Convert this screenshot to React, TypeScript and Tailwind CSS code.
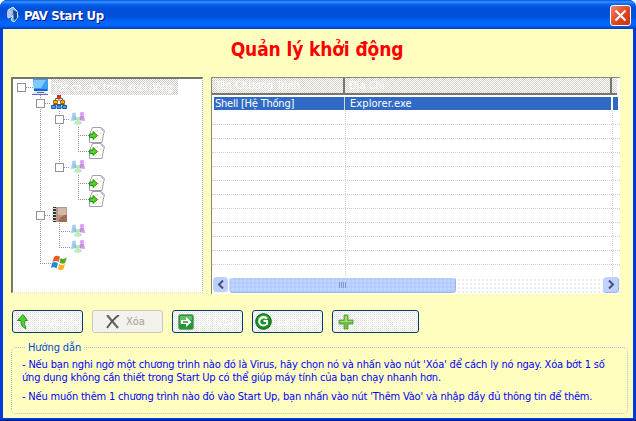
import React from "react";

type Kind = "pc" | "net" | "people" | "doc" | "book" | "win";
type Node = { kind: Kind; pad: string; box: boolean };

const L0 = "pl-[4px]";
const L1 = "pl-[23px]";
const L2 = "pl-[42px]";
const L3 = "pl-[61px]";

const nodes: Node[] = [
  { kind: "pc", pad: L0, box: true },
  { kind: "net", pad: L1, box: true },
  { kind: "people", pad: L2, box: true },
  { kind: "doc", pad: L3, box: false },
  { kind: "doc", pad: L3, box: false },
  { kind: "people", pad: L2, box: true },
  { kind: "doc", pad: L3, box: false },
  { kind: "doc", pad: L3, box: false },
  { kind: "book", pad: L1, box: true },
  { kind: "people", pad: L2, box: false },
  { kind: "people", pad: L2, box: false },
  { kind: "win", pad: L1, box: false },
];

function NodeIcon({ kind }: { kind: Kind }) {
  return (
    <svg width="16" height="16" viewBox="0 0 16 16" className="shrink-0">
      {kind === "pc" && (
        <g>
          <path d="M1 0H16V12H2Z" fill="#3aa0f4" />
          <path d="M2 1H14L9 9H2Z" fill="#7ccaff" />
          <path d="M2 10H15V12H2Z" fill="#1763d8" />
          <path d="M3 12H13L15 15H1Z" fill="#dcdff2" />
          <path d="M0 15.500H16M5 13.500H12" stroke="#6868b8" />
        </g>
      )}
      {kind === "net" && (
        <g>
          <path d="M8 4V6M4.500 5V3.500H11.500V5M2.500 11V9.500H13.500V11M8 9V11" stroke="#555" fill="none" />
          <path d="M6 0h4v4H6z" fill="#d83018" />
          <path d="M2.500 5.500h4v3h-4zM9.500 5.500h4v3h-4z" fill="#f8b810" stroke="#a06000" />
          <path d="M.5 10.500h4v3h-4zM6 10.500h4v3h-4zM11.500 10.500h4v3h-4z" fill="#48a0f0" stroke="#1858b0" />
        </g>
      )}
      {kind === "people" && (
        <g>
          <circle cx="4" cy="3.500" r="2" fill="#a8cdf0" />
          <circle cx="12" cy="3" r="2.200" fill="#dda0ee" />
          <path d="M1 10L2 5h4l2 4z" fill="#9fd0ef" />
          <path d="M8 9l2-4h4l1 5z" fill="#cf96ec" />
          <circle cx="8" cy="8" r="2" fill="#b8e6b0" />
          <path d="M4 13l1-3h6l1 3-4 1z" fill="#c0edb5" />
          <path d="M4 5l2 4M12 5l-2 4" stroke="#5d9abb" strokeDasharray="1 1" />
        </g>
      )}
      {kind === "doc" && (
        <g>
          <path d="M3.500 .5H12L15.500 4L14.500 7L13 15.500H.5V10L2 4Z" fill="#fff" stroke="#a0a0a0" />
          <path d="M12 1l3 3" stroke="#bbb" strokeWidth="2" />
          <path d="M8 4h1M11 6h1M9 9h1M7 12h1M11 12h1" stroke="#edb8b8" />
          <path d="M.5 7H4V4.500L8.500 8.500L4 12.500V10.500H.5Z" fill="#55d026" stroke="#259010" />
        </g>
      )}
      {kind === "book" && (
        <g>
          <path d="M3 0H16V15H3Z" fill="#b99683" />
          <path d="M7 1H15V8H7Z" fill="#d0b9a9" />
          <path d="M13 8H16V15H8V12Z" fill="#a16c54" />
          <path d="M2 0H5V15H2Z" fill="#333" />
          <path d="M1 1.500h4M1 4.500h4M1 7.500h4M1 10.500h4M1 13.500h4" stroke="#ddd" />
        </g>
      )}
      {kind === "win" && (
        <g>
          <path d="M3 2Q6-.5 9 2L7.500 7Q5 5 1.500 7Z" fill="#e75a24" />
          <path d="M9.500 3Q12 5 16 2.500L14 8Q11 9.500 8.500 7.500Z" fill="#58a529" />
          <path d="M1 8Q4 6 7 8.500L5.500 13.500Q3 11.500 0 13Z" fill="#238bdc" />
          <path d="M8 9Q11 11 14 9L12.500 14Q9.500 16.500 7 14Z" fill="#fab11f" />
        </g>
      )}
    </svg>
  );
}

function Tree() {
  return (
    <div className="relative h-[216px] w-[192px] border-l-2 border-t-2 border-r border-b border-dotted border-l-[#77776c] border-t-[#77776c] border-r-[#bbb] border-b-[#ddd] bg-white [border-left-style:solid] [border-top-style:solid]">
      <svg className="absolute left-[-2px] top-[-2px]" width="192" height="216" viewBox="11 77 192 216">
        <path
          d="M26 87.500H33M45 103.500H51M64 119.500H70M64 167.500H70M45 215.500H51M78 135.500H89M78 151.500H89M78 183.500H89M78 199.500H89M59 231.500H70M59 247.500H70M40 263.500H51M40.500 95V263M59.500 111V167M78.500 127V151M78.500 175V199M59.500 223V247"
          stroke="#929292"
          strokeDasharray="1 1"
          fill="none"
        />
      </svg>
      <div className="relative flex flex-col">
        {nodes.map((n, i) => (
          <div key={i} className={"flex h-4 items-center " + n.pad}>
            <span className={"mr-[6px] size-[9px] shrink-0 border " + (n.box ? "border-[#929292] bg-white" : "border-transparent")} />
            <NodeIcon kind={n.kind} />
            {i === 0 && (
              <span className="ml-[3px] flex h-4 w-[127px] items-center bg-[conic-gradient(#fff_25%,#cfcbc4_0_50%,#fff_0_75%,#cfcbc4_0)] bg-[length:2px_2px] pl-[2px] tracking-[-0.35px] text-white">
                Tất cả các trình khởi động
              </span>
            )}
          </div>
        ))}
      </div>
    </div>
  );
}

const header = "h-[17px] shrink-0 border-b-2 border-[#77776c] bg-[conic-gradient(#fff_25%,#d5d1ca_0_50%,#fff_0_75%,#d5d1ca_0)] bg-[length:2px_2px] text-white flex items-center";
const rows = Array.from({ length: 12 }, (_, i) => i);

function List() {
  return (
    <div className="flex h-[217px] w-[409px] flex-col overflow-hidden border-l border-t border-[#88887c] bg-white">
      <div className="flex">
        <div className={header + " w-[133px] border-r-2 pl-[3px]"}>Tên Chương Trình</div>
        <div className={header + " w-[267px] border-r-2 pl-[4px]"}>Địa Chỉ</div>
        <div className={header + " w-[5px]"} />
      </div>
      <div className="mb-px mt-[2px] flex h-[13px] shrink-0 text-white">
        <div className="ml-[2px] flex w-[131px] items-center border-r border-[#d8d8c8] bg-[#316ac5] pl-[1px] tracking-[-0.22px]">Shell [Hệ Thống]</div>
        <div className="flex w-[267px] items-center border-r border-white bg-[#316ac5] pl-[5px] tracking-[0.08px]">Explorer.exe</div>
        <div className="ml-px w-[5px] bg-[#316ac5]" />
      </div>
      <div className="flex h-[167px] shrink-0 flex-col overflow-hidden">
        {rows.map((r) => (
          <div key={r} className="flex h-[14px] shrink-0 border-b border-dotted border-[#cfcfca]">
            <div className="w-[134px] border-r border-dotted border-[#cfcfca]" />
            <div className="w-[267px] border-r border-dotted border-[#cfcfca]" />
          </div>
        ))}
      </div>
      <div className="mt-[-1px] flex h-[17px] w-[408px] shrink-0 bg-[conic-gradient(#fff_25%,#eee_0_50%,#fff_0_75%,#fff_0)] bg-[length:4px_4px]">
        <div className="ml-px flex h-[15px] w-[15px] items-center justify-center rounded-sm bg-[#bdcffb]">
          <svg width="8" height="9" viewBox="0 0 8 9"><path d="M6 .5L2 4.500L6 8.500" fill="none" stroke="#3f5280" strokeWidth="2" /></svg>
        </div>
        <div className="ml-[1px] flex h-4 w-[227px] items-center justify-center rounded-sm border border-[#98b5ee] border-t-white border-l-[#cdd8f5] bg-[conic-gradient(#b9cefe_25%,#c0d6ff_0_50%,#b9cefe_0_75%,#b0cafa_0)] bg-[length:4px_4px]">
          <div className="flex gap-px">
            <span className="h-[6px] w-px bg-[#8297d2]" /><span className="h-[6px] w-px bg-[#8297d2]" /><span className="h-[6px] w-px bg-[#8297d2]" /><span className="h-[6px] w-px bg-[#8297d2]" />
          </div>
        </div>
        <div className="ml-auto mr-[1px] flex h-4 w-[16px] items-center justify-center rounded-sm border-b border-r border-[#98b5ee] bg-[#c1d2fc]">
          <svg width="8" height="9" viewBox="0 0 8 9"><path d="M2 .5L6 4.500L2 8.500" fill="none" stroke="#3f5280" strokeWidth="2" /></svg>
        </div>
      </div>
    </div>
  );
}

const button =
  "flex h-[23px] items-center rounded-[3px] border border-[#003c74] bg-[conic-gradient(#fff_25%,#dddcd8_0_50%,#fff_0_75%,#eeede9_0)] bg-[length:2px_2px] text-white";

function Actions() {
  return (
    <div className="flex gap-[9px]">
      <button className={button + " w-[71px] pl-[4px]"}>
        <svg width="12" height="16" viewBox="0 0 12 16"><path d="M6 .5L10.500 6.500H8Q6.500 10 9 14.500Q3.500 13 4 6.500H.5Z" fill="#4dcf30" stroke="#259a1a" /></svg>
        <span className="ml-[7px] tracking-[-0.3px]">Phục Hồi</span>
      </button>
      <button className="flex h-[23px] w-[71px] items-center rounded-[3px] border border-[#c9c7ba] bg-[#f3f2ec] pl-[13px] text-[#a1a192]">
        <svg width="14" height="14" viewBox="0 0 14 14"><path d="M1 0L12 13" stroke="#666" strokeWidth="2.200" /><path d="M13 0Q8 3 1 13" fill="none" stroke="#555" strokeWidth="1.800" /></svg>
        <span className="ml-[6px]">Xóa</span>
      </button>
      <button className={button + " w-[71px] pl-[5px]"}>
        <svg width="16" height="16" viewBox="0 0 16 16"><rect x=".5" y=".5" width="15" height="15" rx="2" fill="#289438" stroke="#75ae78" /><path d="M2 2H14V6Q8 5 2 10Z" fill="#64be66" /><path d="M3 6H8V3L13.500 8L8 13V10H3Z" fill="#fff" /><path d="M5 8H10" stroke="#289438" strokeWidth="1.500" /></svg>
        <span className="ml-[6px] tracking-[-0.5px]">Vô hiệu</span>
      </button>
      <button className={button + " w-[71px] pl-[2px]"}>
        <svg width="17" height="17" viewBox="0 0 17 17"><circle cx="8.500" cy="8.500" r="7.800" fill="#159222" stroke="#096010" /><path d="M3 5Q8-1 14 5L11 7Q7 5 3 9Z" fill="#49b64a" /><path d="M12 5.500Q9 3 6 5Q3 8 5 11Q8 14 12 11V8H8.500" fill="none" stroke="#fff" strokeWidth="2" /></svg>
        <span className="ml-[5px] tracking-[-0.5px]">Làm Tươi</span>
      </button>
      <button className={button + " w-[87px] pl-[5px]"}>
        <svg width="16" height="16" viewBox="0 0 16 16"><path d="M6 1H10V6H15V10H10V15H6V10H1V6H6Z" fill="#76bd46" stroke="#479a2b" strokeWidth=".8" /><path d="M7 2H9V7H14V8H2V7H7Z" fill="#a4d873" /></svg>
        <span className="ml-[6px]">Thêm Vào</span>
      </button>
    </div>
  );
}

export default function App() {
  return (
    <div className="flex h-[421px] w-[636px] flex-col overflow-hidden rounded-t-[7px] bg-[#003ad8] font-['DejaVu_Sans_Condensed','DejaVu_Sans',sans-serif] text-[11px] leading-[13px] whitespace-nowrap [font-stretch:condensed]">
      <header className="flex h-[29px] shrink-0 items-center bg-[linear-gradient(#0054e3_0px,#3c94ff_2px,#0a66f0_4px,#0050d8_8px,#0050dc_17px,#0066ff_22px,#0062f8_26px,#0038b8_29px)] pl-[6px] pr-[5px] pt-[2px]">
        <svg width="14" height="17" viewBox="0 0 14 17"><path d="M2 3L7 0L11 4L12 10L8 15L5 13L7 9L2 11Z" fill="#7eb8ee" stroke="#d5f2ff" /><path d="M7 3L11 5V11L8 14Z" fill="#164590" /><path d="M1 5L6 3L5 9L1 10Z" fill="#c0c4df" /></svg>
        <h1 className="ml-[4px] text-[13px] font-bold leading-4 tracking-[-0.35px] text-white [text-shadow:1px_1px_#0a1883]">PAV Start Up</h1>
        <button className="ml-auto flex size-[21px] items-center justify-center rounded-[3px] border border-white bg-[linear-gradient(135deg,#f0886a,#e1441c_55%,#c73412)]">
          <svg width="13" height="13" viewBox="0 0 13 13"><path d="M1.500 1.500L11.500 11.500M11.500 1.500L1.500 11.500" stroke="#fff" strokeWidth="2.200" /></svg>
        </button>
      </header>
      <main className="mx-[3px] flex h-[389px] flex-col bg-[#ffffcc] bg-[conic-gradient(#ffff99_25%,#ffffcc_0)] bg-[length:2px_2px]">
        <h2 className="mt-[8px] h-[25px] pr-[2px] text-center text-[19px] font-bold leading-[24px] tracking-[-0.13px] text-[#ff0000]">Quản lý khởi động</h2>
        <div className="ml-[8px] mt-[15px] flex gap-[8px]">
          <Tree />
          <List />
        </div>
        <div className="ml-[9px] mt-[16px]"><Actions /></div>
        <fieldset className="relative ml-[8px] mt-[14px] h-[67px] w-[617px] min-w-0 rounded-[5px] border border-dotted border-[#b4bccc] px-[10px] pt-[10px] text-[#0000ff]">
          <span className="absolute left-[13px] top-[-7px] bg-[#ffffc2] px-[3px] tracking-[-0.1px] text-[#0046d5]">Hướng dẫn</span>
          <p className="tracking-[-0.165px]">- Nếu bạn nghi ngờ một chương trình nào đó là Virus, hãy chọn nó và nhấn vào nút 'Xóa' để cách ly nó ngay. Xóa bớt 1 số</p>
          <p className="tracking-[-0.2px]">ứng dụng không cần thiết trong Start Up có thể giúp máy tính của bạn chạy nhanh hơn.</p>
          <p className="mt-[6px] tracking-[-0.19px]">- Nếu muốn thêm 1 chương trình nào đó vào Start Up, bạn nhấn vào nút 'Thêm Vào' và nhập đầy đủ thông tin để thêm.</p>
        </fieldset>
      </main>
      <div className="h-[3px] bg-[linear-gradient(#0040e0_33%,#001a95_66%)]" />
    </div>
  );
}
